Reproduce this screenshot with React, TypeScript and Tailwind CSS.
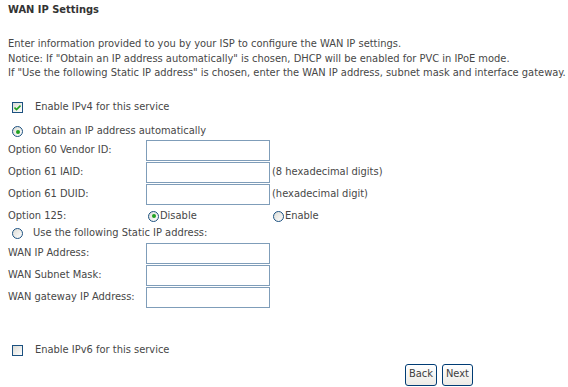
import React from "react";

const font = { fontFamily: '"DejaVu Sans Condensed", "DejaVu Sans", Tahoma, sans-serif' };

function Radio({ checked }: { checked?: boolean }) {
  return (
    <span className="inline-flex h-[11px] w-[11px] items-center justify-center rounded-full border border-[#1c5180] bg-gradient-to-br from-[#dcdcd6] to-white">
      {checked && <span className="h-[4px] w-[4px] rounded-full bg-[#21a121]" />}
    </span>
  );
}

function Checkbox({ checked }: { checked?: boolean }) {
  return (
    <span className="inline-flex h-[11px] w-[11px] items-center justify-center border border-[#1c5180] bg-gradient-to-br from-[#dcdcd6] to-white">
      {checked && (
        <svg width="7" height="7" viewBox="0 0 7 7">
          <path d="M0.5 3.5 L2.5 5.5 L6.5 1.5" stroke="#21a121" strokeWidth="1.6" fill="none" />
        </svg>
      )}
    </span>
  );
}

function Input() {
  return <div className="h-[21px] w-[124px] border border-[#7f9db9] bg-white" />;
}

function Row({ label, extra }: { label: string; extra?: string }) {
  return (
    <div className="flex h-[22px] items-center">
      <div className="w-[138px] shrink-0">{label}</div>
      <Input />
      {extra && <span className="ml-[2px]">{extra}</span>}
    </div>
  );
}

export default function App() {
  return (
    <div className="h-[387px] w-[568px] bg-white pl-[8px] text-[11px] text-[#474747]" style={font}>
      <div className="pt-[3px] font-bold leading-[14px] text-[#333]">WAN IP Settings</div>
      <div className="mt-[20px] leading-[14.5px]">
        <div>Enter information provided to you by your ISP to configure the WAN IP settings.</div>
        <div>Notice: If "Obtain an IP address automatically" is chosen, DHCP will be enabled for PVC in IPoE mode.</div>
        <div>If "Use the following Static IP address" is chosen, enter the WAN IP address, subnet mask and interface gateway.</div>
      </div>
      <div className="mt-[20px] flex h-[14px] items-center pl-[4px]">
        <Checkbox checked />
        <span className="ml-[12px]">Enable IPv4 for this service</span>
      </div>
      <div className="mt-[10px] flex h-[14px] items-center pl-[4px]">
        <Radio checked />
        <span className="ml-[10px]">Obtain an IP address automatically</span>
      </div>
      <div className="mt-[1px]">
        <Row label="Option 60 Vendor ID:" />
        <Row label="Option 61 IAID:" extra="(8 hexadecimal digits)" />
        <Row label="Option 61 DUID:" extra="(hexadecimal digit)" />
        <div className="flex h-[21px] items-center">
          <div className="w-[140px] shrink-0">Option 125:</div>
          <div className="flex w-[125px] items-center">
            <Radio checked />
            <span className="ml-[1px]">Disable</span>
          </div>
          <div className="flex items-center">
            <Radio />
            <span className="ml-[1px]">Enable</span>
          </div>
        </div>
      </div>
      <div className="flex h-[14px] items-center pl-[4px]">
        <Radio />
        <span className="ml-[10px]">Use the following Static IP address:</span>
      </div>
      <div className="mt-[2px]">
        <Row label="WAN IP Address:" />
        <Row label="WAN Subnet Mask:" />
        <Row label="WAN gateway IP Address:" />
      </div>
      <div className="mt-[35px] flex h-[14px] items-center pl-[4px]">
        <Checkbox />
        <span className="ml-[12px]">Enable IPv6 for this service</span>
      </div>
      <div className="mt-[6px] flex justify-end gap-[5px] pr-[95px]">
        <button className="h-[22px] rounded-[3px] border border-[#003c74] bg-gradient-to-b from-white to-[#ecebe6] px-[3px] text-[11px] text-[#404040]" style={font}>Back</button>
        <button className="h-[22px] rounded-[3px] border border-[#003c74] bg-gradient-to-b from-white to-[#ecebe6] px-[3px] text-[11px] text-[#404040]" style={font}>Next</button>
      </div>
    </div>
  );
}
